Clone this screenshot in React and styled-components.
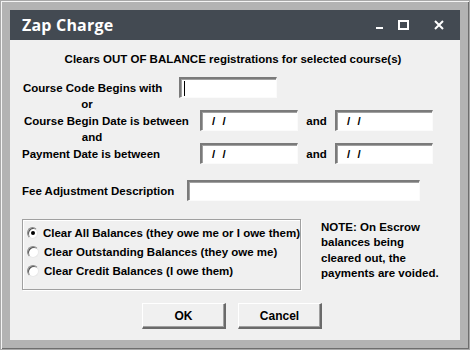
import styled, { createGlobalStyle } from 'styled-components';

const Global = createGlobalStyle`
  html, body { margin: 0; padding: 0; background: #b3b3b3; }
  body { font-family: 'Liberation Sans', Arial, sans-serif; }
`;

const Window = styled.div`
  width: 470px;
  height: 350px;
  box-sizing: border-box;
  background: #b3b3b3;
  border: 1px solid #a8a8a8;
  box-shadow: inset 1px 1px 0 #f4f4f4, inset -1px -1px 0 #6e6e6e;
  padding: 9px;
  display: flex;
  flex-direction: column;
`;

const TitleBar = styled.div`
  height: 30px;
  background: #434a52;
  display: flex;
  align-items: center;
  padding-left: 12px;
  color: #fff;
`;

const Title = styled.div`
  font-family: 'Open Sans', 'Noto Sans', sans-serif;
  font-weight: 700;
  font-size: 16px;
  letter-spacing: 0.2px;
  flex: 1;
`;

const Controls = styled.div`
  display: flex;
  align-items: center;
  height: 100%;
`;

const ControlBtn = styled.div`
  width: ${p => p.$w}px;
  height: 30px;
  display: flex;
  align-items: center;
  justify-content: center;
`;

const Body = styled.div`
  flex: 1;
  background: #f0f0f0;
  padding: 12px 0 0 12px;
  font-family: 'Liberation Sans', Arial, sans-serif;
  font-weight: 700;
  font-size: 11.5px;
  color: #000;
`;

const Heading = styled.div`
  line-height: 14px;
  text-align: center;
  padding-right: 16px;
  margin-bottom: 11px;
`;

const Row = styled.div`
  display: flex;
  align-items: center;
  height: 21px;
  margin-top: ${p => p.$mt || 0}px;
`;

const Label = styled.div`
  width: ${p => p.$w}px;
  padding-left: ${p => p.$pl || 0}px;
  box-sizing: border-box;
  flex-shrink: 0;
  white-space: nowrap;
`;

const Connector = styled.div`
  width: ${p => p.$w}px;
  height: 12px;
  line-height: 12px;
  text-align: center;
`;

const Field = styled.div`
  width: ${p => p.$w}px;
  height: 21px;
  box-sizing: border-box;
  background: #fff;
  border-style: solid;
  border-width: 2px 1px 1px 2px;
  border-color: #7a7a7a #fbfbfb #fbfbfb #7a7a7a;
  box-shadow: inset 1px 1px 0 #a0a0a0;
  display: flex;
  align-items: center;
  padding-left: ${p => p.$pl || 10}px;
  font-size: 11.5px;
  word-spacing: 4px;
  flex-shrink: 0;
`;

const Caret = styled.span`
  width: 1px;
  height: 15px;
  background: #000;
  margin-left: -9px;
`;

const And = styled.div`
  width: 37px;
  text-align: center;
  flex-shrink: 0;
`;

const Lower = styled.div`
  display: flex;
  margin-top: 18px;
`;

const GroupBox = styled.div`
  width: 279px;
  height: 71px;
  box-sizing: border-box;
  border: 1px solid #a0a0a0;
  box-shadow: inset 1px 1px 0 #fff, 1px 1px 0 #fff;
  padding: 3px 0 0 4px;
`;

const RadioRow = styled.label`
  display: flex;
  align-items: center;
  height: 19px;
  white-space: nowrap;
`;

const RadioDot = styled.span`
  width: 12px;
  height: 12px;
  box-sizing: border-box;
  border-radius: 50%;
  background: #fff;
  border: 1px solid;
  border-color: #8a8a8a #e8e8e8 #e8e8e8 #8a8a8a;
  box-shadow: inset 1px 1px 0 #555;
  margin-right: 5px;
  display: flex;
  align-items: center;
  justify-content: center;
  &::after {
    content: '';
    width: 4px;
    height: 4px;
    border-radius: 50%;
    background: ${p => (p.$on ? '#000' : 'transparent')};
    margin: 1px 0 0 1px;
  }
`;

const Note = styled.div`
  margin-left: 20px;
  margin-top: 1px;
  line-height: 15.3px;
  white-space: nowrap;
`;

const ButtonRow = styled.div`
  display: flex;
  justify-content: center;
  gap: 12px;
  margin-top: 13px;
  padding-right: 18px;
`;

const Button = styled.div`
  width: 84px;
  height: 26px;
  box-sizing: border-box;
  background: #f0f0f0;
  border-style: solid;
  border-width: 1px 2px 2px 1px;
  border-color: #fff #6a6a6a #6a6a6a #fff;
  box-shadow: inset -1px -1px 0 #a0a0a0;
  display: flex;
  align-items: center;
  justify-content: center;
  font-size: 12px;
`;

export default function App() {
  return (
    <Window>
      <Global />
      <TitleBar>
        <Title>Zap Charge</Title>
        <Controls>
          <ControlBtn $w={20}>
            <svg width="8" height="10" viewBox="0 0 8 10">
              <rect x="0" y="7" width="7" height="2" fill="#fff" />
            </svg>
          </ControlBtn>
          <ControlBtn $w={28}>
            <svg width="12" height="11" viewBox="0 0 12 11">
              <rect x="1" y="1" width="9" height="8" fill="none" stroke="#fff" strokeWidth="2" />
            </svg>
          </ControlBtn>
          <ControlBtn $w={42}>
            <svg width="10" height="10" viewBox="0 0 10 10">
              <path d="M1 1 L9 9 M9 1 L1 9" stroke="#fff" strokeWidth="2" />
            </svg>
          </ControlBtn>
        </Controls>
      </TitleBar>
      <Body>
        <Heading>Clears OUT OF BALANCE registrations for selected course(s)</Heading>
        <Row>
          <Label $w={157} $pl={1}>Course Code Begins with</Label>
          <Field $w={98} $pl={12}><Caret /></Field>
        </Row>
        <Connector $w={130}>or</Connector>
        <Row>
          <Label $w={178} $pl={2}>Course Begin Date is between</Label>
          <Field $w={98}>/ /</Field>
          <And>and</And>
          <Field $w={98}>/ /</Field>
        </Row>
        <Connector $w={140}>and</Connector>
        <Row>
          <Label $w={178}>Payment Date is between</Label>
          <Field $w={98}>/ /</Field>
          <And>and</And>
          <Field $w={98}>/ /</Field>
        </Row>
        <Row $mt={16}>
          <Label $w={165}>Fee Adjustment Description</Label>
          <Field $w={233} />
        </Row>
        <Lower>
          <GroupBox>
            <RadioRow><RadioDot $on />Clear All Balances (they owe me or I owe them)</RadioRow>
            <RadioRow><RadioDot />Clear Outstanding Balances (they owe me)</RadioRow>
            <RadioRow><RadioDot />Clear Credit Balances (I owe them)</RadioRow>
          </GroupBox>
          <Note>
            NOTE: On Escrow<br />
            balances being<br />
            cleared out, the<br />
            payments are voided.
          </Note>
        </Lower>
        <ButtonRow>
          <Button>OK</Button>
          <Button>Cancel</Button>
        </ButtonRow>
      </Body>
    </Window>
  );
}
